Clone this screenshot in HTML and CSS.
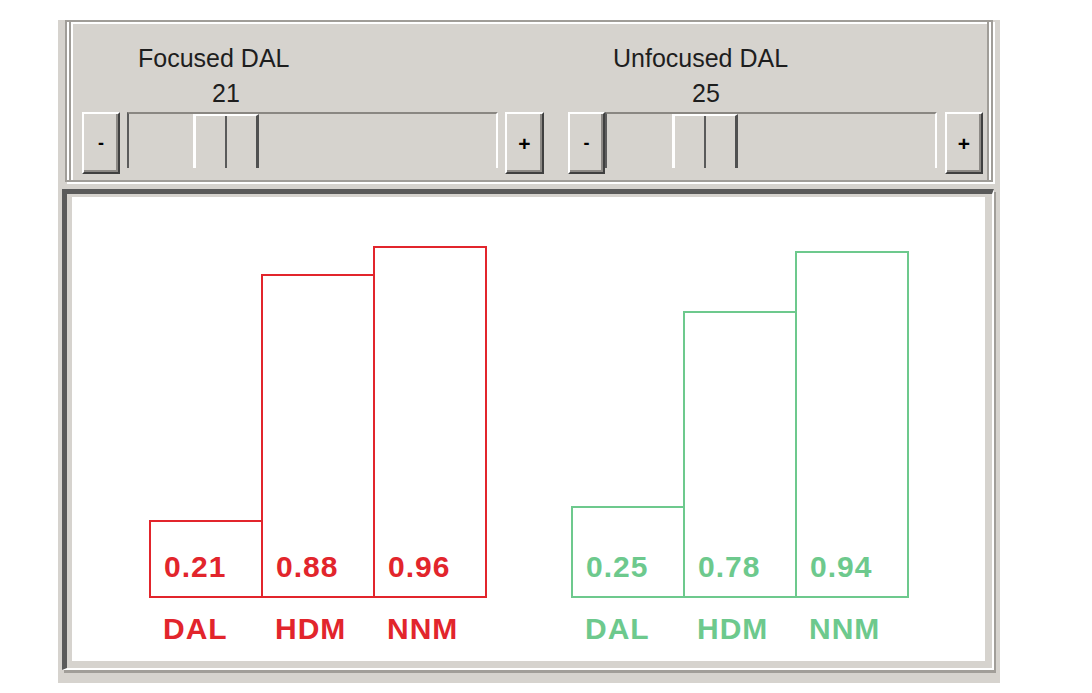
FILE: index.html
```html
<!DOCTYPE html>
<html>
<head>
<meta charset="utf-8">
<link rel="stylesheet" href="styles.css">
</head>
<body>
<div class="window">
  <div class="group">
    <div class="group-inner">
      <div class="sliders">
        <div class="slider slider-focused">
          <div class="caption">Focused DAL</div>
          <div class="value">21</div>
          <div class="slider-row">
            <div class="btn btn-minus">-</div>
            <div class="track"><div class="thumb" style="margin-left:64px"></div></div>
            <div class="btn btn-plus">+</div>
          </div>
        </div>
        <div class="slider slider-unfocused">
          <div class="caption">Unfocused DAL</div>
          <div class="value">25</div>
          <div class="slider-row">
            <div class="btn btn-minus">-</div>
            <div class="track"><div class="thumb" style="margin-left:65px"></div></div>
            <div class="btn btn-plus">+</div>
          </div>
        </div>
      </div>
    </div>
  </div>
  <div class="chart">
    <div class="plot">
      <div class="series red">
        <div class="col"><div class="bar" style="height:78px"><span class="num">0.21</span></div><div class="label">DAL</div></div>
        <div class="col"><div class="bar" style="height:324px"><span class="num">0.88</span></div><div class="label">HDM</div></div>
        <div class="col"><div class="bar" style="height:352px"><span class="num">0.96</span></div><div class="label">NNM</div></div>
      </div>
      <div class="series green">
        <div class="col"><div class="bar" style="height:92px"><span class="num">0.25</span></div><div class="label">DAL</div></div>
        <div class="col"><div class="bar" style="height:287px"><span class="num">0.78</span></div><div class="label">HDM</div></div>
        <div class="col"><div class="bar" style="height:347px"><span class="num">0.94</span></div><div class="label">NNM</div></div>
      </div>
    </div>
  </div>
</div>
</body>
</html>
```

FILE: styles.css
```css
* { box-sizing: border-box; }

body {
  margin: 0;
  background: #ffffff;
  font-family: "Liberation Sans", Arial, sans-serif;
}

.window {
  margin: 20px 0 0 58px;
  width: 942px;
  height: 663px;
  background: #d6d3ce;
  display: flex;
  flex-direction: column;
}

/* etched group box */
.group {
  margin-left: 7px;
  width: 928px;
  height: 162px;
  border: 2px solid #a09d98;
  box-shadow: inset 2px 2px 0 #ffffff, 2px 2px 0 #ffffff;
  display: flex;
}

.group-inner {
  margin: 0 2px;
  flex: 1;
  border-left: 2px solid #a09d98;
  border-right: 2px solid #a09d98;
  box-shadow: inset 2px 0 0 #ffffff, 2px 0 0 #ffffff;
  padding: 19px 0 0 11px;
}

.sliders {
  display: flex;
  gap: 24px;
}

.slider {
  display: flex;
  flex-direction: column;
  color: #1e1e1e;
  font-size: 25px;
  line-height: 35px;
}

.slider-focused .caption { margin-left: 56px; }
.slider-focused .value { margin-left: 130px; }
.slider-unfocused .caption { margin-left: 45px; }
.slider-unfocused .value { margin-left: 124px; }

.slider-row {
  display: flex;
  align-items: flex-start;
  margin-top: 1px;
}

.btn {
  height: 62px;
  border: 2px solid;
  border-color: #ffffff #404040 #404040 #ffffff;
  box-shadow: inset -2px -2px 0 #8c8985;
  display: flex;
  align-items: center;
  justify-content: center;
  color: #000;
  font-size: 21px;
  font-weight: bold;
  line-height: 1;
}

.btn-minus { font-size: 18px; }

.slider-focused .btn-minus { width: 38px; }
.slider-focused .btn-plus { width: 39px; margin-left: 7px; }
.slider-focused .track { width: 371px; margin-left: 7px; }

.slider-unfocused .btn-minus { width: 37px; }
.slider-unfocused .track { width: 332px; }
.slider-unfocused .btn-plus { width: 38px; margin-left: 8px; }

.track {
  height: 56px;
  border-top: 2px solid #8a8782;
  border-left: 2px solid #5c5c5c;
  border-right: 2px solid #ffffff;
  display: flex;
}

.thumb {
  width: 66px;
  height: 54px;
  border-top: 2px solid #ffffff;
  border-left: 3px solid #ffffff;
  border-right: 3px solid #505050;
  display: flex;
  justify-content: center;
}

.thumb::before {
  content: "";
  width: 2px;
  background: #5a5a5a;
}

/* sunken chart panel */
.chart {
  margin: 7px 0 0 4px;
  width: 932px;
  height: 481px;
  border-style: solid;
  border-width: 5px 2px 2px 5px;
  border-color: #5a5a5a #ffffff #ffffff #5a5a5a;
  padding: 3px 7px 7px 5px;
  box-shadow: 2px 3px 0 #a19e99;
}

.plot {
  height: 100%;
  background: #ffffff;
  display: flex;
  align-items: flex-end;
  gap: 84px;
  padding: 0 0 17px 77px;
}

.series {
  display: flex;
  align-items: flex-end;
}

.series.red { color: #e2252c; }
.series.green { color: #6dc98d; }

.col {
  width: 114px;
  display: flex;
  flex-direction: column;
}

.col + .col { margin-left: -2px; }

.bar {
  border: 2px solid currentColor;
  display: flex;
  align-items: flex-end;
  padding: 0 0 14px 13px;
}

.num, .label {
  font-weight: bold;
  font-size: 30px;
  line-height: 30px;
  letter-spacing: 1px;
}

.label {
  margin-top: 16px;
  padding-left: 14px;
}
```
